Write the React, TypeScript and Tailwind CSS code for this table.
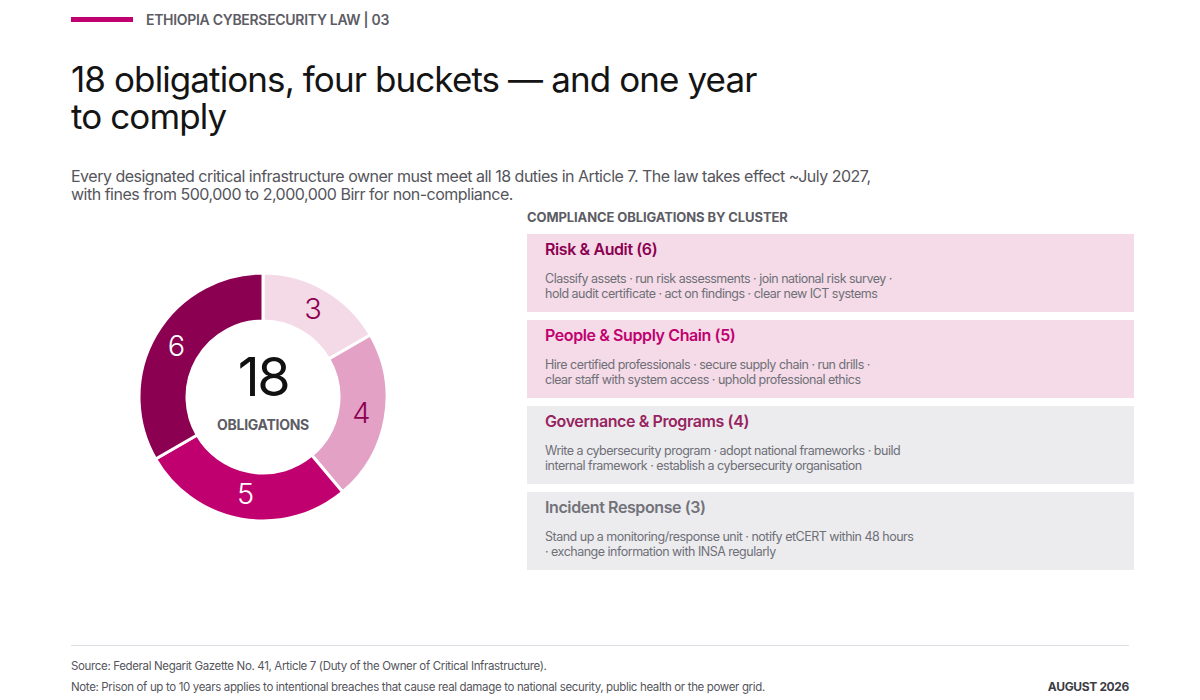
const segments = [
  { value: 3, color: '#f4d9e7', text: '#8c0051' },
  { value: 4, color: '#e3a1c5', text: '#8c0051' },
  { value: 5, color: '#c1006f', text: '#ffffff' },
  { value: 6, color: '#8c0051', text: '#ffffff' },
];

const clusters = [
  {
    title: 'Risk & Audit (6)',
    titleClass: 'text-[#8c0051]',
    bg: 'bg-[#f4dbe7]',
    lines: ['Classify assets · run risk assessments · join national risk survey ·', 'hold audit certificate · act on findings · clear new ICT systems'],
  },
  {
    title: 'People & Supply Chain (5)',
    titleClass: 'text-[#c1006f]',
    bg: 'bg-[#f4dbe7]',
    lines: ['Hire certified professionals · secure supply chain · run drills ·', 'clear staff with system access · uphold professional ethics'],
  },
  {
    title: 'Governance & Programs (4)',
    titleClass: 'text-[#98245f]',
    bg: 'bg-[#ececef]',
    lines: ['Write a cybersecurity program · adopt national frameworks · build', 'internal framework · establish a cybersecurity organisation'],
  },
  {
    title: 'Incident Response (3)',
    titleClass: 'text-[#727279]',
    bg: 'bg-[#ececef]',
    lines: ['Stand up a monitoring/response unit · notify etCERT within 48 hours', '· exchange information with INSA regularly'],
  },
];

function Donut() {
  const cx = 125;
  const cy = 125;
  const ro = 124;
  const ri = 76;
  const total = segments.reduce((s, x) => s + x.value, 0);
  const pt = (r: number, a: number) => {
    const rad = (a * Math.PI) / 180;
    return [cx + r * Math.sin(rad), cy - r * Math.cos(rad)];
  };
  let start = 0;
  return (
    <svg width="250" height="250" viewBox="0 0 250 250">
      {segments.map((s, i) => {
        const sweep = (s.value / total) * 360;
        const end = start + sweep;
        const [x1, y1] = pt(ro, start);
        const [x2, y2] = pt(ro, end);
        const [x3, y3] = pt(ri, end);
        const [x4, y4] = pt(ri, start);
        const large = sweep > 180 ? 1 : 0;
        const d = `M${x1} ${y1} A${ro} ${ro} 0 ${large} 1 ${x2} ${y2} L${x3} ${y3} A${ri} ${ri} 0 ${large} 0 ${x4} ${y4} Z`;
        const [lx, ly] = pt(100, start + sweep / 2);
        start = end;
        return (
          <g key={i}>
            <path d={d} fill={s.color} stroke="#ffffff" strokeWidth="3" />
            <text x={lx} y={ly - 2} fill={s.text} fontSize="29" fontWeight="300" textAnchor="middle" dominantBaseline="central">
              {s.value}
            </text>
          </g>
        );
      })}
      <text x={cx} y={104} fill="#111111" fontSize="54" fontWeight="400" textAnchor="middle" dominantBaseline="central" letterSpacing="-2.5">
        18
      </text>
      <text x={cx} y={152} fill="#5c5c64" fontSize="14" fontWeight="700" textAnchor="middle" dominantBaseline="central" letterSpacing="-0.3">
        OBLIGATIONS
      </text>
    </svg>
  );
}

export default function App() {
  return (
    <div className="w-[1200px] h-[700px] bg-white px-[71px] flex flex-col font-['Inter',sans-serif] overflow-hidden">
      <div className="flex items-center gap-[13px] pt-[9px]">
        <div className="w-[62px] h-[5px] bg-[#c1006f]" />
        <div className="text-[14px] font-semibold text-[#5c5c64] tracking-[-0.3px]">ETHIOPIA CYBERSECURITY LAW | 03</div>
      </div>

      <h1 className="mt-[31px] text-[35px] leading-[37px] font-normal text-[#141414] tracking-[-0.9px]">
        18 obligations, four buckets — and one year
        <br />
        to comply
      </h1>

      <p className="mt-[32px] text-[16px] leading-[18px] text-[#55555c] tracking-[-0.5px]">
        Every designated critical infrastructure owner must meet all 18 duties in Article 7. The law takes effect ~July 2027,
        <br />
        with fines from 500,000 to 2,000,000 Birr for non-compliance.
      </p>

      <div className="flex mt-[6px]">
        <div className="w-[456px] shrink-0 pt-[63px] pl-[67px]">
          <Donut />
        </div>
        <div className="flex-1 mr-[-5px]">
          <div className="text-[13px] font-bold text-[#5c5c64] tracking-[-0.1px] leading-[16px]">COMPLIANCE OBLIGATIONS BY CLUSTER</div>
          <div className="mt-[9px] flex flex-col gap-[8px]">
            {clusters.map((c) => (
              <div key={c.title} className={`${c.bg} h-[78px] pl-[18px] pt-[5px]`}>
                <div className={`${c.titleClass} text-[16px] font-semibold tracking-[-0.4px] leading-[20px]`}>{c.title}</div>
                <div className="mt-[12px] text-[12.5px] leading-[15px] text-[#6f6f77] tracking-[-0.5px]">
                  {c.lines.map((l) => (
                    <div key={l}>{l}</div>
                  ))}
                </div>
              </div>
            ))}
          </div>
        </div>
      </div>

      <div className="mt-auto border-t border-[#dcdce3] pt-[12px] pb-[5px] text-[11.5px] text-[#55555c] tracking-[-0.35px]">
        <div className="leading-[16px]">Source: Federal Negarit Gazette No. 41, Article 7 (Duty of the Owner of Critical Infrastructure).</div>
        <div className="mt-[5px] flex justify-between leading-[16px]">
          <span>Note: Prison of up to 10 years applies to intentional breaches that cause real damage to national security, public health or the power grid.</span>
          <span className="font-bold text-[#3c3c44] text-[12px]">AUGUST 2026</span>
        </div>
      </div>
    </div>
  );
}
